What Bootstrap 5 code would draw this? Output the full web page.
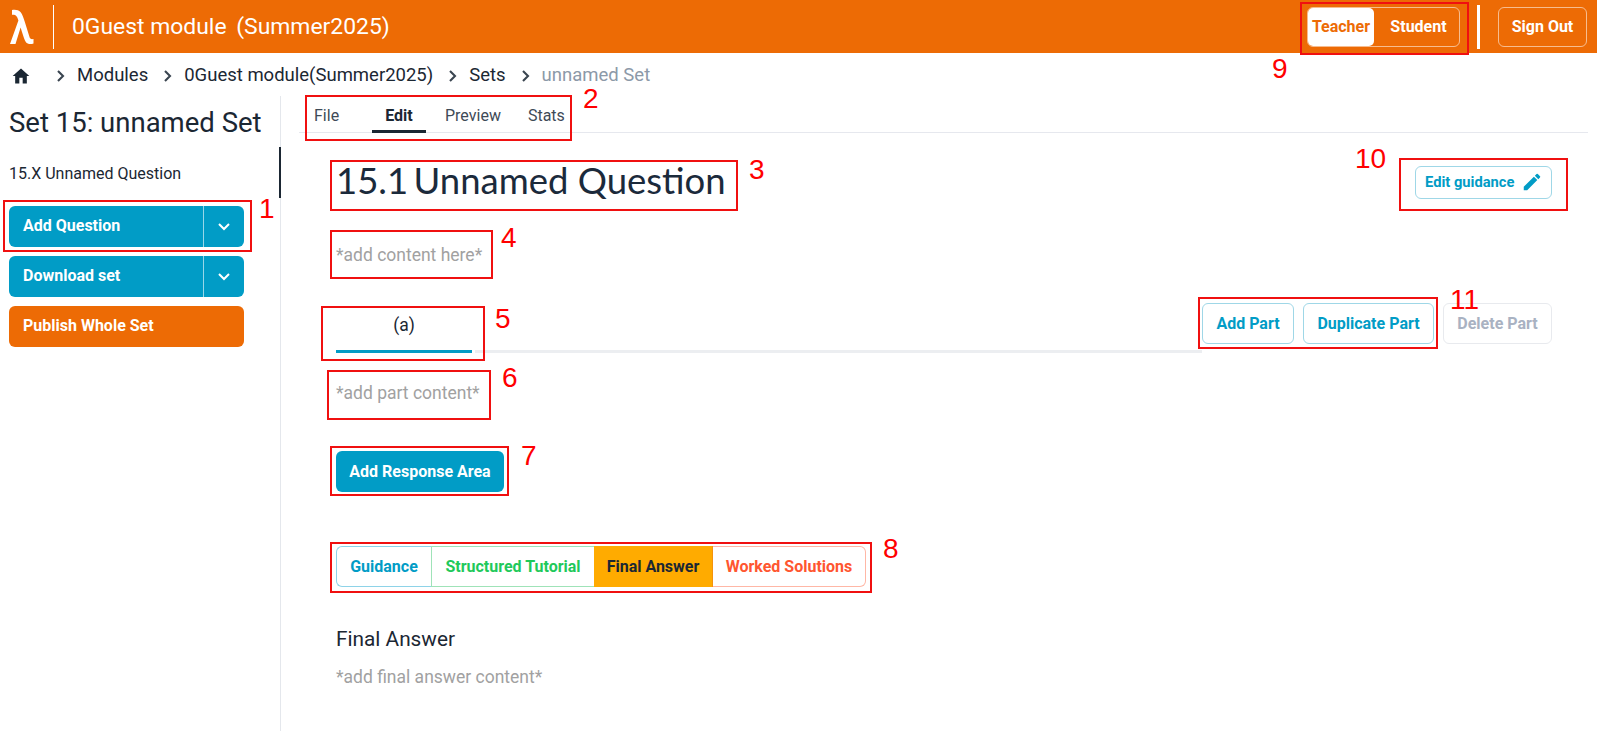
<!DOCTYPE html>
<html lang="en">
<head>
<meta charset="utf-8">
<title>Set 15: unnamed Set</title>
<link rel="stylesheet" href="https://cdn.jsdelivr.net/npm/bootstrap@5.3.0/dist/css/bootstrap.min.css">
<style>
html,body{height:100%;}
body{font-family:Roboto,sans-serif;color:#1b2733;background:#fff;overflow:hidden;position:relative;}
.topbar{height:53px;background:#ed6b05;color:#fff;padding:0 10px 0 10px;}
.lambda-mark{width:24px;height:36px;}
.top-rule{width:1px;height:44px;background:#fff;margin-left:19px;margin-right:18px;}
.top-title{font-size:22.900px;line-height:1;margin-top:1px;}
.top-title span{margin-left:4px;}
.role-group{margin-right:17px;width:153px;height:40px;border:1px solid rgba(255,255,255,.55);border-radius:6px;font-size:16px;font-weight:700;}
.role-on{width:66px;background:#fff;color:#ed6b05;border-radius:5px;}
.role-off{flex:1;color:#fff;padding-left:4px;}
.top-sep{width:3px;height:44px;background:#fff;margin-right:18px;}
.signout{width:89px;height:40px;border:1px solid rgba(255,255,255,.55);border-radius:6px;color:#fff;font-size:16px;font-weight:700;}
.crumbs{height:43px;padding-left:11px;padding-top:2px;font-size:18.500px;}
.crumbs svg.chev{margin:0 12px 0 15px;}
.crumbs svg.chev.first{margin-left:25px;margin-right:12px;}
.crumbs .last{color:#8c99a8;}
.shell{height:635px;}
.side{width:281px;border-right:1px solid #e4e7ec;flex:none;padding-left:9px;}
.side-title{font-size:27.500px;font-weight:400;line-height:1;margin:13px 0 0;}
.side-item{height:51px;margin-top:10px;margin-right:-1px;padding-top:3px;font-size:16px;border-right:2px solid #1b2733;}
.action{width:235px;height:41px;border-radius:6px;color:#fff;font-size:16px;font-weight:700;margin-bottom:9px;padding-left:14px;background:#019cc6;}
.action.orange{background:#ed6b05;}
.action .lbl{flex:1;}
.action .arrow{width:41px;height:100%;border-left:1px solid rgba(255,255,255,.6);}
.main{flex:1;padding-left:18px;padding-right:9px;}
.tabs-row{height:37px;border-bottom:1px solid #e6e8ee;font-size:16px;color:#3e4a57;}
.tab-item{height:37px;padding-top:8px;}
.tab-file{margin-left:15px;width:58px;}
.tab-edit{width:54px;text-align:center;font-weight:700;color:#1b2733;border-bottom:3px solid #1b2733;}
.tab-prev{margin-left:19px;}
.tab-stat{margin-left:27px;}
.body-pad{padding-left:37px;padding-right:36px;}
.q-head{margin-top:22px;height:50px;}
.q-title{font-family:Lato,sans-serif;font-size:36.500px;font-weight:400;line-height:50px;margin:0;color:#1b2a3b;}
.q-num{margin-right:-4px;}
.ol-btn{border:1px solid #9fd7e7;border-radius:6px;color:#019cc6;font-weight:700;font-size:16px;background:#fff;}
.guide-btn{width:137px;height:33px;font-size:14.700px;padding-left:9px;gap:7px;margin-top:4px;}
.hint{color:#a1a1a1;font-size:17.500px;line-height:24px;}
.hint-q{margin-top:38px;}
.parts{margin-top:36px;height:58px;}
.part-tab{width:136px;height:50px;padding-top:9px;text-align:center;font-size:17.500px;border-bottom:3px solid #019cc6;}
.part-line{flex:1;height:3px;background:#eceef1;margin-left:3px;margin-top:47px;}
.part-btns{gap:9px;margin-top:0;}
.part-btn{height:41px;}
.delete-btn{border-color:#e8eaee;color:#a9b2c2;}
.hint-p{margin-top:20px;}
.resp-btn{width:168px;height:41px;background:#019cc6;color:#fff;font-weight:700;font-size:16px;border-radius:6px;margin-top:46px;}
.kind-group{margin-top:54px;width:530px;height:41px;font-size:16px;font-weight:700;}
.k{height:100%;}
.k-guid{width:95px;color:#019cc6;border:1px solid #8ed3e8;border-right:0;border-radius:6px 0 0 6px;}
.k-tut{width:163px;color:#1fc95b;border:1px solid #9fe3b8;border-right:0;}
.k-final{width:119px;color:#1b2733;background:#ffab00;border-right:1px solid #f5930c;}
.k-work{flex:1;color:#ff5630;border:1px solid #ffb7a6;border-left:0;border-radius:0 6px 6px 0;}
.fa-title{font-size:20.800px;font-weight:400;line-height:24px;margin:40px 0 0;}
.hint-f{margin-top:14px;}
.redbox{position:absolute;border:2px solid #f01010;}
.rednum{position:absolute;color:#f00;font-family:"Liberation Sans",sans-serif;font-size:28px;line-height:1;}
</style>
</head>
<body>
<header class="topbar d-flex align-items-center">
  <svg class="lambda-mark" viewBox="0 0 24 36" aria-hidden="true"><path fill="#fff" d="M2 1 C5.500 .4 8.500 1 10.500 3 C12.500 5.500 13.500 9 15 13.500 L19.500 28 C20 29.800 21.200 30.500 23.500 30 L23.500 34.500 C20.500 35.500 17.500 35.200 15.800 33 C14.500 31 13.500 27.500 12 23 L10.600 18.500 L5.500 35 L0 35 L8.400 11.500 C7.300 7.500 6 5.500 2 5.800 Z"/></svg>
  <div class="top-rule"></div>
  <div class="top-title">0Guest module <span>(Summer2025)</span></div>
  <div class="ms-auto d-flex align-items-center">
    <div class="role-group d-flex">
      <div class="role-on d-flex align-items-center justify-content-center">Teacher</div>
      <div class="role-off d-flex align-items-center justify-content-center">Student</div>
    </div>
    <div class="top-sep"></div>
    <div class="signout d-flex align-items-center justify-content-center">Sign Out</div>
  </div>
</header>
<nav class="crumbs d-flex align-items-center">
  <svg width="20" height="20" viewBox="0 0 24 24" aria-hidden="true"><path fill="#1b2733" d="M10 21v-7h4v7h5v-9h3L12 3 2 12h3v9z"/></svg>
  <svg class="chev first" width="9" height="14" viewBox="0 0 9 14" aria-hidden="true"><path d="M2 2l5 5-5 5" fill="none" stroke="#3a4550" stroke-width="2.100"/></svg>
  <span>Modules</span>
  <svg class="chev" width="9" height="14" viewBox="0 0 9 14" aria-hidden="true"><path d="M2 2l5 5-5 5" fill="none" stroke="#3a4550" stroke-width="2.100"/></svg>
  <span>0Guest module(Summer2025)</span>
  <svg class="chev" width="9" height="14" viewBox="0 0 9 14" aria-hidden="true"><path d="M2 2l5 5-5 5" fill="none" stroke="#3a4550" stroke-width="2.100"/></svg>
  <span>Sets</span>
  <svg class="chev" width="9" height="14" viewBox="0 0 9 14" aria-hidden="true"><path d="M2 2l5 5-5 5" fill="none" stroke="#3a4550" stroke-width="2.100"/></svg>
  <span class="last">unnamed Set</span>
</nav>
<div class="shell d-flex">
  <aside class="side">
    <h2 class="side-title">Set 15: unnamed Set</h2>
    <div class="side-item d-flex align-items-center">15.X Unnamed Question</div>
    <div class="action d-flex align-items-center mt-2"><span class="lbl">Add Question</span><span class="arrow d-flex align-items-center justify-content-center"><svg width="14" height="9" viewBox="0 0 14 9" aria-hidden="true"><path d="M2 2l5 5 5-5" fill="none" stroke="#fff" stroke-width="2"/></svg></span></div>
    <div class="action d-flex align-items-center"><span class="lbl">Download set</span><span class="arrow d-flex align-items-center justify-content-center"><svg width="14" height="9" viewBox="0 0 14 9" aria-hidden="true"><path d="M2 2l5 5 5-5" fill="none" stroke="#fff" stroke-width="2"/></svg></span></div>
    <div class="action orange d-flex align-items-center">Publish Whole Set</div>
  </aside>
  <main class="main">
    <div class="tabs-row d-flex">
      <div class="tab-item tab-file">File</div>
      <div class="tab-item tab-edit">Edit</div>
      <div class="tab-item tab-prev">Preview</div>
      <div class="tab-item tab-stat">Stats</div>
    </div>
    <div class="body-pad">
      <div class="q-head d-flex justify-content-between align-items-center">
        <h1 class="q-title"><span class="q-num">15.1</span> Unnamed Question</h1>
        <div class="ol-btn guide-btn d-flex align-items-center">Edit guidance
          <svg width="22" height="22" viewBox="0 0 24 24" aria-hidden="true"><path fill="#019cc6" d="M3 17.250V21h3.750L17.810 9.940l-3.750-3.750L3 17.250zM20.710 7.040a1 1 0 0 0 0-1.410l-2.340-2.340a1 1 0 0 0-1.410 0l-1.830 1.830 3.750 3.750 1.830-1.830z"/></svg>
        </div>
      </div>
      <div class="hint hint-q">*add content here*</div>
      <div class="parts d-flex align-items-start">
        <div class="part-tab">(a)</div>
        <div class="part-line"></div>
        <div class="part-btns d-flex">
          <div class="ol-btn part-btn d-flex align-items-center justify-content-center" style="width:92px">Add Part</div>
          <div class="ol-btn part-btn d-flex align-items-center justify-content-center" style="width:131px">Duplicate Part</div>
          <div class="ol-btn part-btn delete-btn d-flex align-items-center justify-content-center" style="width:109px">Delete Part</div>
        </div>
      </div>
      <div class="hint hint-p">*add part content*</div>
      <div class="resp-btn d-flex align-items-center justify-content-center">Add Response Area</div>
      <div class="kind-group d-flex">
        <div class="k k-guid d-flex align-items-center justify-content-center">Guidance</div>
        <div class="k k-tut d-flex align-items-center justify-content-center">Structured Tutorial</div>
        <div class="k k-final d-flex align-items-center justify-content-center">Final Answer</div>
        <div class="k k-work d-flex align-items-center justify-content-center">Worked Solutions</div>
      </div>
      <h3 class="fa-title">Final Answer</h3>
      <div class="hint hint-f">*add final answer content*</div>
    </div>
  </main>
</div>

<div class="redbox" style="left:3px;top:200px;width:249px;height:52px"></div>
<div class="redbox" style="left:305px;top:95px;width:267px;height:46px"></div>
<div class="redbox" style="left:330px;top:160px;width:408px;height:51px"></div>
<div class="redbox" style="left:330px;top:230px;width:163px;height:49px"></div>
<div class="redbox" style="left:321px;top:306px;width:164px;height:55px"></div>
<div class="redbox" style="left:327px;top:370px;width:164px;height:50px"></div>
<div class="redbox" style="left:330px;top:446px;width:179px;height:50px"></div>
<div class="redbox" style="left:330px;top:542px;width:542px;height:51px"></div>
<div class="redbox" style="left:1300px;top:2px;width:169px;height:53px"></div>
<div class="redbox" style="left:1399px;top:158px;width:169px;height:53px"></div>
<div class="redbox" style="left:1198px;top:297px;width:240px;height:52px"></div>
<div class="rednum" style="left:259px;top:195px">1</div>
<div class="rednum" style="left:583px;top:85px">2</div>
<div class="rednum" style="left:749px;top:156px">3</div>
<div class="rednum" style="left:501px;top:224px">4</div>
<div class="rednum" style="left:495px;top:305px">5</div>
<div class="rednum" style="left:502px;top:364px">6</div>
<div class="rednum" style="left:521px;top:442px">7</div>
<div class="rednum" style="left:883px;top:535px">8</div>
<div class="rednum" style="left:1272px;top:55px">9</div>
<div class="rednum" style="left:1355px;top:145px">10</div>
<div class="rednum" style="left:1450px;top:286px">11</div>
<script src="https://cdn.jsdelivr.net/npm/bootstrap@5.3.0/dist/js/bootstrap.bundle.min.js"></script>
</body>
</html>
